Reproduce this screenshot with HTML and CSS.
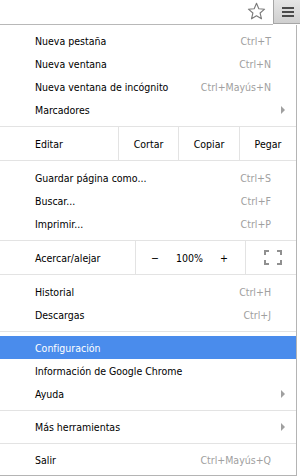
FILE: index.html
```html
<!DOCTYPE html>
<html lang="es">
<head>
<meta charset="utf-8">
<link rel="stylesheet" href="styles.css">
</head>
<body>
<div class="toolbar">
  <div class="bar">
    <svg class="star" width="19" height="19" viewBox="0 0 19 19"><path d="M9.5 1.3 L11.8 6.8 L17.6 7.2 L13.1 11 L14.5 16.8 L9.5 13.7 L4.5 16.8 L5.9 11 L1.4 7.2 L7.2 6.8 Z" fill="#fff" stroke="#7a7a7a" stroke-width="1.1" stroke-linejoin="round"/></svg>
  </div>
  <div class="menubtn"><span></span><span></span><span></span></div>
</div>
<div class="menu">
  <div class="group">
    <div class="item"><span>Nueva pestaña</span><span class="sc">Ctrl+T</span></div>
    <div class="item"><span>Nueva ventana</span><span class="sc">Ctrl+N</span></div>
    <div class="item"><span>Nueva ventana de incógnito</span><span class="sc">Ctrl+Mayús+N</span></div>
    <div class="item"><span>Marcadores</span><span class="arrow"></span></div>
  </div>
  <div class="btnrow">
    <div class="label">Editar</div>
    <div class="cell c1">Cortar</div>
    <div class="cell c2">Copiar</div>
    <div class="cell c3">Pegar</div>
  </div>
  <div class="group">
    <div class="item"><span>Guardar página como...</span><span class="sc">Ctrl+S</span></div>
    <div class="item"><span>Buscar...</span><span class="sc">Ctrl+F</span></div>
    <div class="item"><span>Imprimir...</span><span class="sc">Ctrl+P</span></div>
  </div>
  <div class="btnrow">
    <div class="label zl">Acercar/alejar</div>
    <div class="zoomctl"><span>−</span><span class="pct">100%</span><span>+</span></div>
    <div class="fs">
      <svg width="18" height="15" viewBox="0 0 18 15"><path d="M1 5 V1 H5 M13 1 H17 V5 M17 10 V14 H13 M5 14 H1 V10" fill="none" stroke="#909090" stroke-width="2"/></svg>
    </div>
  </div>
  <div class="group">
    <div class="item"><span>Historial</span><span class="sc">Ctrl+H</span></div>
    <div class="item"><span>Descargas</span><span class="sc">Ctrl+J</span></div>
  </div>
  <div class="group sep">
    <div class="item active"><span>Configuración</span></div>
    <div class="item"><span>Información de Google Chrome</span></div>
    <div class="item"><span>Ayuda</span><span class="arrow"></span></div>
  </div>
  <div class="group sep">
    <div class="item"><span>Más herramientas</span><span class="arrow"></span></div>
  </div>
  <div class="group sep">
    <div class="item"><span>Salir</span><span class="sc">Ctrl+Mayús+Q</span></div>
  </div>
</div>
</body>
</html>
```
FILE: styles.css
```css
* { box-sizing: border-box; }
body {
  margin: 0;
  width: 300px;
  height: 476px;
  background: #fff;
  font-family: "DejaVu Sans Condensed", "DejaVu Sans", Verdana, sans-serif;
  font-size: 10.5px;
  color: #000;
  overflow: hidden;
}
.toolbar {
  display: flex;
  height: 25px;
}
.bar {
  flex: 1;
  height: 25px;
  border-bottom: 1px solid #b8b8b8;
  display: flex;
  justify-content: flex-end;
  align-items: flex-start;
  padding: 2px 7px 0 0;
}
.menubtn {
  width: 27px;
  height: 24px;
  background: linear-gradient(#e6e6e6, #cfcfcf);
  border-left: 1px solid #a6a6a6;
  border-bottom: 1px solid #a6a6a6;
  display: flex;
  flex-direction: column;
  align-items: center;
  justify-content: center;
  gap: 2px;
  padding-left: 1px;
}
.menubtn span {
  display: block;
  width: 12px;
  height: 2px;
  background: #4a4a4a;
}
.menu {
  width: 297px;
  height: 451px;
  border-right: 1px solid #b4b4b4;
  border-bottom: 1px solid #b4b4b4;
}
.group {
  padding: 4px 0 5px;
}
.group.sep {
  border-top: 1px solid #e3e3e3;
}
.item {
  height: 23px;
  display: flex;
  align-items: center;
  justify-content: space-between;
  padding: 0 25px 0 35px;
}
.item.active {
  background: #4a8cec;
  color: #fff;
}
.sc {
  color: #a0a0a0;
}
.arrow {
  width: 0;
  height: 0;
  border-top: 4px solid transparent;
  border-bottom: 4px solid transparent;
  border-left: 4px solid #a0a0a0;
  margin-right: -14px;
}
.btnrow {
  display: flex;
  height: 35px;
  border-top: 1px solid #e3e3e3;
  border-bottom: 1px solid #e3e3e3;
  align-items: stretch;
}
.label {
  width: 118px;
  padding-left: 35px;
  display: flex;
  align-items: center;
}
.label.zl { width: 135px; }
.cell {
  border-left: 1px solid #e3e3e3;
  display: flex;
  align-items: center;
  justify-content: center;
}
.c1 { width: 60px; }
.c2 { width: 61px; }
.c3 { flex: 1; }
.zoomctl {
  width: 110px;
  border-left: 1px solid #e3e3e3;
  display: flex;
  align-items: center;
  justify-content: space-between;
  padding: 0 17px 0 15px;
}
.fs {
  flex: 1;
  border-left: 1px solid #e3e3e3;
  display: flex;
  align-items: center;
  justify-content: center;
  padding-left: 3px;
}
.btnrow + .group { padding-top: 5px; }
```
